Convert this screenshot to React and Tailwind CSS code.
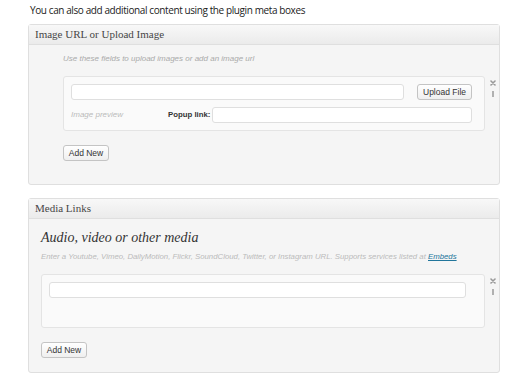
import React from "react";

const sans = { fontFamily: '"Liberation Sans", Arial, sans-serif' };
const serif = { fontFamily: '"Liberation Serif", Georgia, serif' };

function RowControls() {
  return (
    <div className="flex w-[15px] shrink-0 flex-col items-center gap-[5px] pt-[4px]">
      <svg width="6" height="6" viewBox="0 0 6 6">
        <path d="M1 1 L5 5 M5 1 L1 5" stroke="#999" strokeWidth="1.6" strokeLinecap="round" />
      </svg>
      <span className="h-[6px] w-[2px] bg-[#b0b0b0]" />
    </div>
  );
}

function Button({ children, className = "" }) {
  return (
    <button
      className={`h-[16px] shrink-0 rounded-[3px] border border-[#c4c4c4] bg-gradient-to-b from-white to-[#efefef] px-0 text-[8.5px] leading-[14px] text-[#333] ${className}`}
      style={sans}
    >
      {children}
    </button>
  );
}

function MetaBox({ title, children }) {
  return (
    <section className="mx-[28px] w-[472px] rounded-[3px] border border-[#dfdfdf] bg-[#f5f5f5]">
      <div
        className="h-[20px] border-b border-[#dfdfdf] bg-gradient-to-b from-[#f8f8f8] to-[#ebebeb] px-[6px] text-[11px] leading-[19px] text-[#464646]"
        style={serif}
      >
        {title}
      </div>
      {children}
    </section>
  );
}

export default function App() {
  return (
    <div className="h-[382px] w-[510px] overflow-hidden bg-white">
      <p
        className="pl-[30px] pt-[4px] text-[10px] leading-[12px] text-[#222]"
        style={{ fontFamily: '"Open Sans", sans-serif', letterSpacing: "-0.4px" }}
      >
        You can also add additional content using the plugin meta boxes
      </p>

      <div className="mt-[8px]">
        <MetaBox title="Image URL or Upload Image">
          <div className="pb-[21px] pl-[34px]" style={sans}>
            <p className="pt-[9px] text-[8px] italic leading-[10px] text-[#aaa]">
              Use these fields to upload images or add an image url
            </p>
            <div className="mt-[12px] flex">
              <div className="w-[422px] shrink-0 rounded-[3px] border border-[#e4e4e4] bg-[#fafafa] pb-[7px] pl-[7px] pr-[12px] pt-[7px]">
                <div className="flex items-center gap-[13px]">
                  <div className="h-[16px] w-[333px] rounded-[3px] border border-[#dfdfdf] bg-white" />
                  <Button className="w-[55px]">Upload File</Button>
                </div>
                <div className="mt-[7px] flex h-[16px] items-center">
                  <span className="w-[97px] shrink-0 whitespace-nowrap text-[8px] italic leading-[10px] text-[#bbb]">
                    Image preview
                  </span>
                  <span className="mr-[2px] shrink-0 whitespace-nowrap text-[7.8px] font-bold leading-[10px] text-[#333]">
                    Popup link:
                  </span>
                  <div className="h-[16px] flex-1 rounded-[3px] border border-[#dfdfdf] bg-white" />
                </div>
              </div>
              <RowControls />
            </div>
            <Button className="mt-[14px] w-[46px]">Add New</Button>
          </div>
        </MetaBox>
      </div>

      <div className="mt-[13px]">
        <MetaBox title="Media Links">
          <div className="pb-[13px] pl-[12px]">
            <h2 className="pt-[9px] text-[14px] italic leading-[20px] text-[#333]" style={serif}>
              Audio, video or other media
            </h2>
            <p className="mt-[4px] text-[7.8px] italic leading-[10px] text-[#bbb]" style={sans}>
              Enter a Youtube, Vimeo, DailyMotion, Flickr, SoundCloud, Twitter, or Instagram URL. Supports services listed at{" "}
              <a className="text-[#21759b] underline">Embeds</a>
            </p>
            <div className="mt-[12px] flex">
              <div className="h-[54px] w-[444px] shrink-0 rounded-[3px] border border-[#e4e4e4] bg-[#fafafa] px-[7px] pt-[7px]">
                <div className="h-[16px] w-[417px] rounded-[3px] border border-[#dfdfdf] bg-white" />
              </div>
              <RowControls />
            </div>
            <Button className="mt-[14px] w-[46px]">Add New</Button>
          </div>
        </MetaBox>
      </div>
    </div>
  );
}
